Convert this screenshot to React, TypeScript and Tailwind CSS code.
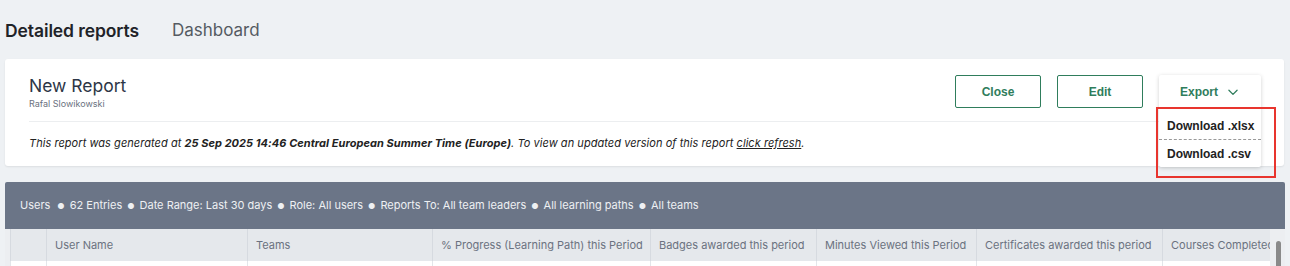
import React from 'react';

const columns = [
  { label: '', width: 'w-[36px]' },
  { label: 'User Name', width: 'w-[201px]' },
  { label: 'Teams', width: 'w-[185px]' },
  { label: '% Progress (Learning Path) this Period', width: 'w-[218px]' },
  { label: 'Badges awarded this period', width: 'w-[166px]' },
  { label: 'Minutes Viewed this Period', width: 'w-[160px]' },
  { label: 'Certificates awarded this period', width: 'w-[186px]' },
  { label: 'Courses Completed this Period', width: 'w-[108px]' },
];

const filters = ['62 Entries', 'Date Range: Last 30 days', 'Role: All users', 'Reports To: All team leaders', 'All learning paths', 'All teams'];

function ChevronDown() {
  return (
    <svg width="14" height="14" viewBox="0 0 24 24" fill="none" stroke="currentColor" strokeWidth="2.2" strokeLinecap="round" strokeLinejoin="round">
      <path d="M5 9l7 7 7-7" />
    </svg>
  );
}

function ExportMenu() {
  return (
    <div className="relative w-[102px] h-[33px]">
      <div className="absolute left-0 top-0 w-[102px] bg-white shadow-[0_1px_4px_rgba(0,0,0,0.18)] rounded-[2px] z-10 font-['Liberation_Sans',Arial,sans-serif] whitespace-nowrap">
        <button className="w-full h-[33px] flex items-center justify-center gap-[8px] text-[12px] font-bold text-[#2f7d5c]">
          Export
          <ChevronDown />
        </button>
        <div className="px-[8px] h-[31px] pt-[4px] flex items-center text-[12px] font-bold text-[#222]">Download .xlsx</div>
        <div className="border-t border-dashed border-[#999]" />
        <div className="px-[8px] h-[27px] flex items-center text-[12px] font-bold text-[#222]">Download .csv</div>
      </div>
    </div>
  );
}

export default function App() {
  return (
    <div className="relative w-[1290px] h-[266px] overflow-hidden bg-[#eef1f4] font-['Inter',sans-serif]">
      {/* tabs */}
      <div className="h-[59px] flex items-center pt-[3px] pl-[5px] gap-[33px]">
        <span className="text-[17.5px] font-semibold text-[#1f2328] tracking-[-0.1px]">Detailed reports</span>
        <span className="text-[17px] text-[#555b62]">Dashboard</span>
      </div>

      {/* report card */}
      <div className="ml-[5px] w-[1279px] h-[107px] bg-white rounded-[3px] shadow-[0_1px_2px_rgba(0,0,0,0.08)]">
        <div className="px-[24px]">
          <div className="flex justify-between h-[63px] pt-[16px] border-b border-[#eceef0]">
            <div>
              <div className="text-[17.5px] leading-[22px] text-[#2d3646]">New Report</div>
              <div className="text-[9px] leading-[12px] text-[#6b7280] mt-[1px]">Rafal Slowikowski</div>
            </div>
            <div className="flex gap-[16px] font-['Liberation_Sans',Arial,sans-serif] mr-[-1px]">
              <button className="w-[86px] h-[33px] border border-[#2f7d5c] rounded-[2px] text-[12px] font-bold text-[#2f7d5c]">Close</button>
              <button className="w-[86px] h-[33px] border border-[#2f7d5c] rounded-[2px] text-[12px] font-bold text-[#2f7d5c]">Edit</button>
              <ExportMenu />
            </div>
          </div>
          <div className="pt-[13px] text-[11px] italic text-[#222] tracking-[0.05px]">
            This report was generated at <b>25 Sep 2025 14:46 Central European Summer Time (Europe)</b>. To view an updated version of this report <span className="underline">click refresh</span>.
          </div>
        </div>
      </div>

      {/* table */}
      <div className="ml-[5px] mt-[16px] w-[1280px]">
        <div className="h-[47px] bg-[#6b7587] rounded-t-[2px] flex items-center pl-[15px] text-[11px] text-[#eef0f3]">
          <span className="mr-[2px]">Users</span>
          {filters.map((f) => (
            <span key={f} className="flex items-center">
              <span className="mx-[5px] text-[8px]">●</span>
              {f}
            </span>
          ))}
        </div>
        <div className="flex bg-[#eceef1]">
          <div className="w-[5px] shrink-0" />
          <div className="flex flex-col">
            <div className="flex h-[32px] bg-[#e5e8ec]">
              {columns.map((c, i) => (
                <div key={i} className={`${c.width} shrink-0 border-l border-[#d6dae0] flex items-center pl-[8px] text-[11px] text-[#6b7280] whitespace-nowrap overflow-hidden`}>
                  {c.label}
                </div>
              ))}
            </div>
            <div className="flex h-[20px] bg-white">
              {columns.map((c, i) => (
                <div key={i} className={`${c.width} shrink-0 border-l border-[#e3e6ea]`} />
              ))}
            </div>
          </div>
          <div className="flex-1 relative">
            <div className="absolute left-[6px] top-[12px] w-[5px] h-[40px] rounded-[3px] bg-[#8a8a8a]" />
          </div>
        </div>
      </div>

      {/* annotation box */}
      <div className="absolute left-[1156px] top-[107px] w-[120px] h-[71px] border-2 border-[#e8352e] z-20" />
    </div>
  );
}
